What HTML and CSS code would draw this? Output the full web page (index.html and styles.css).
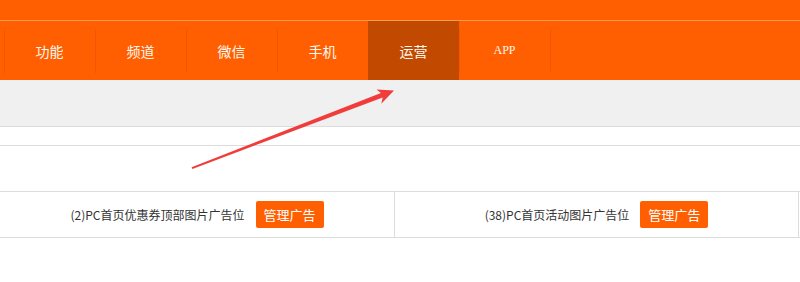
FILE: index.html
```html
<!DOCTYPE html>
<html lang="zh-CN">
<head>
    <meta charset="UTF-8">
    <title>广告管理</title>
    <link rel="stylesheet" href="styles.css">
</head>
<body>
<div class="page">
    <div class="topbar"></div>
    <div class="nav">
        <a class="nav-item">功能</a>
        <a class="nav-item">频道</a>
        <a class="nav-item">微信</a>
        <a class="nav-item">手机</a>
        <a class="nav-item active">运营</a>
        <a class="nav-item nav-app">APP</a>
        <span class="nav-end"></span>
    </div>
    <div class="subbar"></div>
    <div class="strip"></div>
    <div class="ad-row">
        <div class="ad-cell first">
            <span class="ad-name">(2)PC首页优惠券顶部图片广告位</span>
            <button class="ad-btn">管理广告</button>
        </div>
        <div class="ad-cell second">
            <span class="ad-name">(38)PC首页活动图片广告位</span>
            <button class="ad-btn">管理广告</button>
        </div>
    </div>

    <!-- 标注箭头 -->
    <svg class="arrow" width="800" height="282" viewBox="0 0 800 282">
        <polygon fill="#f13c3c" points="191.6,167.3 380.9,93.0 376.6,89.6 394,90.5 381.3,103.8 382.7,97.6 192.4,168.9"/>
    </svg>
</div>
</body>
</html>
```

FILE: styles.css
```css
body {
    margin: 0;
    background-color: #fff;
    font-family: "Noto Sans CJK SC", "Liberation Sans", sans-serif;
}

.page {
    position: relative;
    width: 800px;
    height: 282px;
    overflow: hidden;
}

.topbar {
    height: 20px;
    background-color: #ff5f00;
}

.nav {
    display: flex;
    height: 59px;
    padding-left: 4px;
    background-color: #ff5f00;
    border-top: 1px solid #ff9a55;
}

.nav-item {
    width: 91px;
    display: flex;
    align-items: center;
    justify-content: center;
    color: #fff8ee;
    font-size: 14px;
    /* 细分隔线 */
    background: linear-gradient(#ef5800, #ef5800) no-repeat left center / 1px 44px;
}

.nav-item.active {
    background: #c24a00;
}

.nav-app {
    font-family: "Liberation Serif", serif;
    font-size: 12px;
}

.nav-end {
    width: 1px;
    background: linear-gradient(#ef5800, #ef5800) no-repeat left center / 1px 44px;
}

.subbar {
    height: 46px;
    background-color: #f0f0f0;
    border-bottom: 1px solid #dcdcdc;
}

.strip {
    height: 18px;
    border-bottom: 1px solid #dcdcdc;
    margin-bottom: 45px;
}

.ad-row {
    display: flex;
    height: 45px;
    border-top: 1px solid #dcdcdc;
    border-bottom: 1px solid #dcdcdc;
}

.ad-cell {
    display: flex;
    align-items: center;
    justify-content: center;
    gap: 11px;
    border-right: 1px solid #dcdcdc;
}

.ad-cell.first {
    width: 394px;
}

.ad-cell.second {
    width: 403px;
}

.ad-name {
    font-size: 12px;
    color: #333;
}

.ad-btn {
    width: 68px;
    height: 27px;
    padding: 0;
    border: none;
    border-radius: 2px;
    background-color: #ff5f00;
    color: #fff;
    font-family: inherit;
    font-size: 13px;
    cursor: pointer;
}

.arrow {
    position: absolute;
    left: 0;
    top: 0;
    pointer-events: none;
}
```
